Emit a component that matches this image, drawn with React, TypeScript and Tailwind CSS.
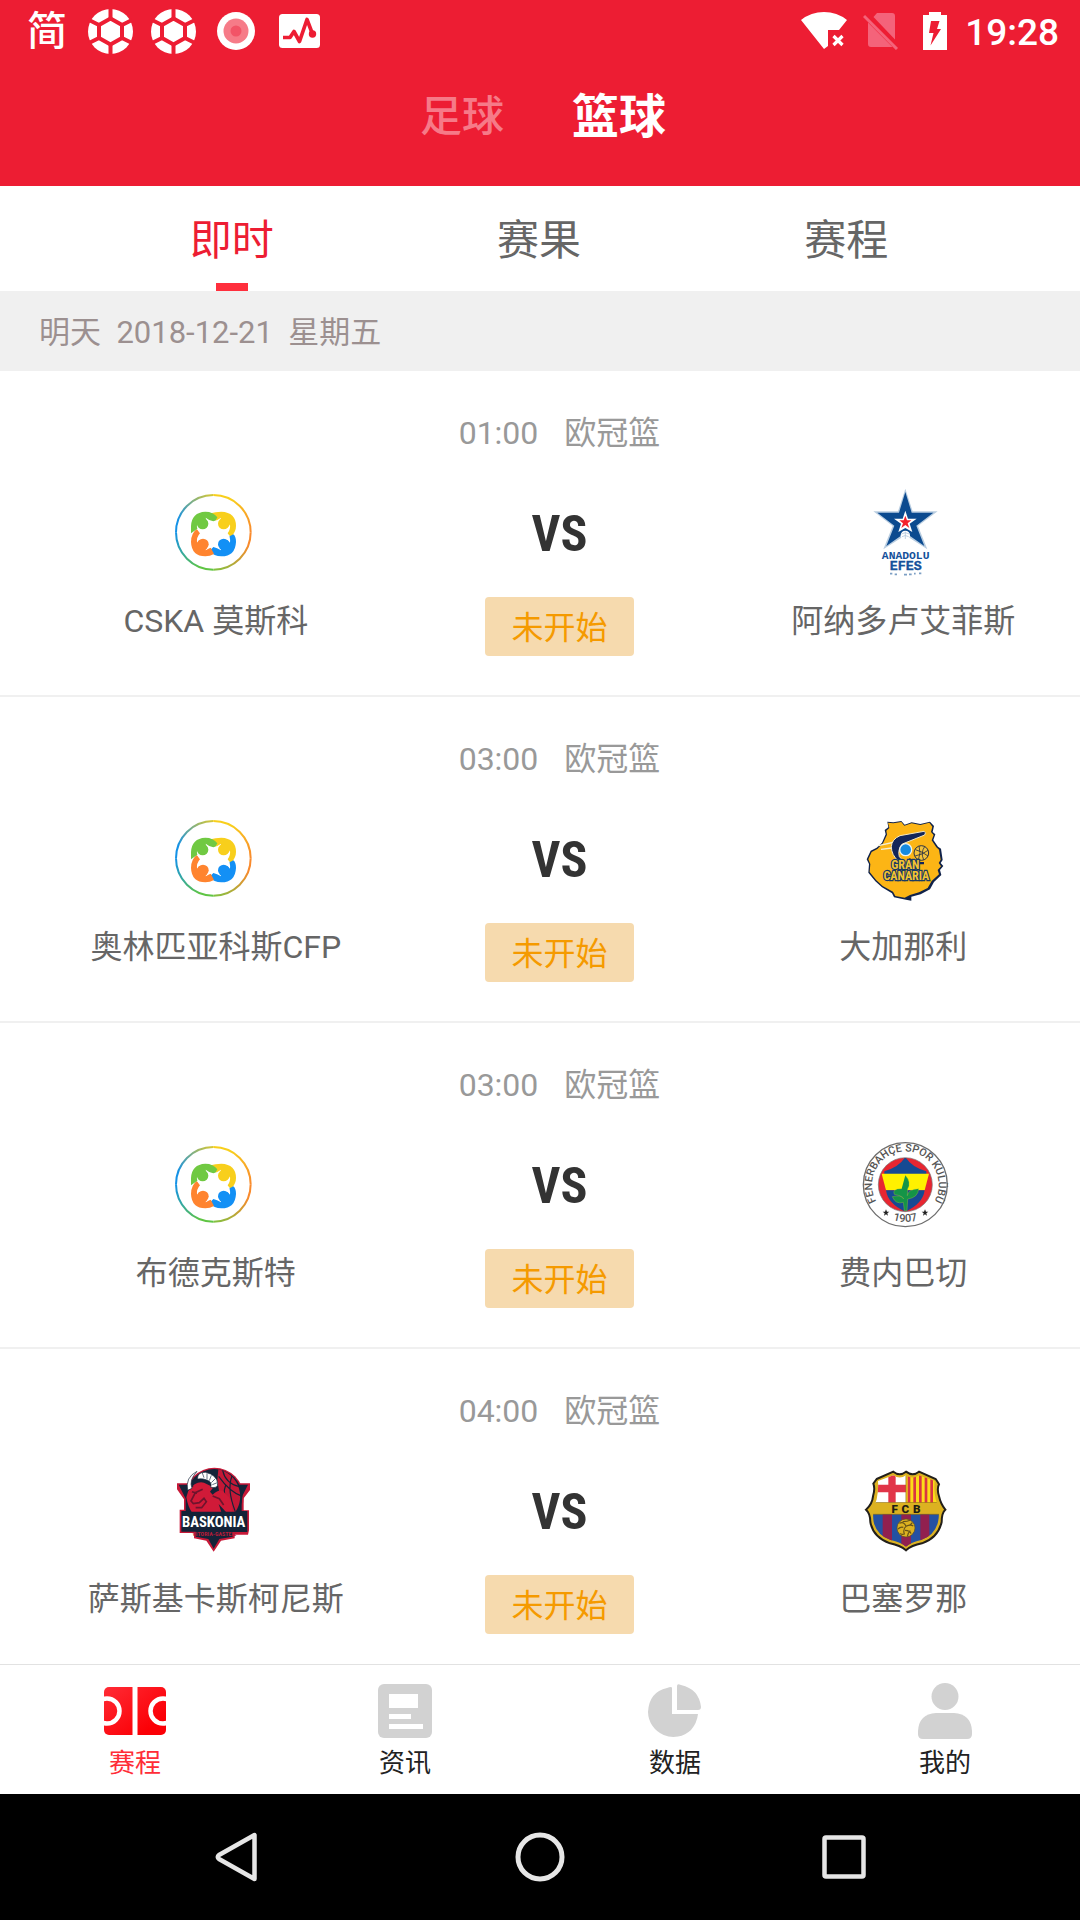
import React from "react";

const RED = "#ed1d33";

/* ---------- status bar icons ---------- */

function BallIcon() {
  return (
    <svg viewBox="0 0 45 45" className="size-[45px]" aria-hidden="true">
      <circle cx="22.5" cy="22.5" r="22.5" fill="#fff" />
      <g stroke={RED} strokeWidth="4" fill="none">
        <path d="M22.5 -1V10M22.5 35V46M1 11 12 16.500M44 11 33 16.500M1 34 12 28.500M44 34 33 28.500" />
        <path d="M22.5 9.500 34 16V29L22.500 35.500 11 29V16Z" />
      </g>
    </svg>
  );
}

function RecordIcon() {
  return (
    <svg viewBox="0 0 38 38" className="size-[38px]" aria-hidden="true">
      <circle cx="19" cy="19" r="19" fill="#fff" />
      <circle cx="19" cy="19" r="12.500" fill="#f67b88" />
      <circle cx="19" cy="19" r="5.500" fill="#f25467" />
    </svg>
  );
}

function PulseIcon() {
  return (
    <svg viewBox="0 0 42 36" className="h-[36px] w-[42px]" aria-hidden="true">
      <rect y="1" width="41" height="34" rx="3.500" fill="#fff" />
      <path d="M4 24.500H11L15 18.500 20.500 28.500 28 6.500 33.500 21" fill="none" stroke={RED} strokeWidth="3.700" strokeLinejoin="round" />
      <circle cx="33.500" cy="21" r="3.700" fill={RED} />
    </svg>
  );
}

function WifiIcon() {
  return (
    <svg viewBox="0 0 46 38" className="h-[38px] w-[46px]" aria-hidden="true">
      <path d="M0 8Q10 0 23 0T46 8L38 18H27V34L23 37Z" fill="#fff" />
      <path d="M32.500 24 41.500 33M41.500 24 32.500 33" stroke="#fff" strokeWidth="3.200" />
    </svg>
  );
}

function NoSimIcon() {
  return (
    <svg viewBox="0 0 36 38" className="h-[38px] w-[36px]" aria-hidden="true">
      <path d="M10.500 5 14 1H29Q32 1 32 4V27.500ZM5 10.500 29.500 35H8Q5 35 5 32Z" fill="#f4637a" />
      <path d="M1 4 34 37" stroke="#f4637a" strokeWidth="3" />
    </svg>
  );
}

function BatteryIcon() {
  return (
    <svg viewBox="0 0 24 38" className="h-[38px] w-[24px]" aria-hidden="true">
      <path d="M6 0H18V3H24V38H0V3H6Z" fill="#fff" />
      <path d="M8 9H16.500L14 17H18L7.500 33.500 10.500 21H6Z" fill={RED} />
    </svg>
  );
}

/* ---------- team logos ---------- */

const logoClass = "size-[88px] overflow-visible";

function DefaultLogo() {
  const uid = React.useId();
  return (
    <svg viewBox="36 24 264 264" className={logoClass} role="img" aria-label="球队">
      <defs>
        <linearGradient id={uid + "a"} x1="0" y1="1" x2="1" y2="0">
          <stop offset=".2" stopColor="#1592e6" />
          <stop offset="1" stopColor="#d8c832" />
        </linearGradient>
        <linearGradient id={uid + "b"} x1="0" y1="0" x2="1" y2="1">
          <stop offset=".3" stopColor="#f8cf1c" />
          <stop offset="1" stopColor="#f98a2c" />
        </linearGradient>
        <linearGradient id={uid + "c"} x1="1" y1="0" x2="0" y2="1">
          <stop offset=".2" stopColor="#f98a2c" />
          <stop offset="1" stopColor="#7fc241" />
        </linearGradient>
        <linearGradient id={uid + "d"} x1="1" y1="1" x2="0" y2="0">
          <stop offset=".2" stopColor="#5fc544" />
          <stop offset="1" stopColor="#1592e6" />
        </linearGradient>
      </defs>
      <g fill="none" strokeWidth="6">
        <path d="M48 157A112 112 0 0 1 160 45" stroke={`url(#${uid}a)`} />
        <path d="M160 45A112 112 0 0 1 272 157" stroke={`url(#${uid}b)`} />
        <path d="M272 157A112 112 0 0 1 160 269" stroke={`url(#${uid}c)`} />
        <path d="M160 269A112 112 0 0 1 48 157" stroke={`url(#${uid}d)`} />
      </g>
      <path d="M152 100Q165 95 184 95Q228 97 228 138Q228 155 214 170L180 150Z" fill="#f8cf1c" />
      <path d="M220 163Q228 170 228 185Q226 229 184 229Q162 229 148 214L170 190Z" fill="#1390f5" />
      <path d="M110 147Q93 160 93 186Q95 229 136 229Q150 229 162 222L140 180Z" fill="#ff842f" />
      <path d="M172 112Q160 95 136 95Q95 97 93 138V160L112 146 140 170Z" fill="#70c942" />
      <path d="M137 113Q148 122 160 124Q171 122 183 113Q176 130 190 142Q204 146 210 133Q212 148 203 160Q212 170 210 188Q203 176 190 180Q176 186 183 211Q171 203 160 201Q148 203 137 211Q144 192 130 180Q117 176 111 188Q109 172 120 160Q109 148 111 133Q117 146 130 142Q144 132 137 113Z" fill="#fff" />
      <circle cx="128" cy="131" r="17" fill="#70c942" />
      <circle cx="191" cy="131" r="17" fill="#f8cf1c" />
      <circle cx="129" cy="193" r="17" fill="#ff842f" />
      <circle cx="191" cy="193" r="17" fill="#1390f5" />
    </svg>
  );
}

function EfesLogo() {
  return (
    <svg viewBox="237 54 264 264" className={logoClass} role="img" aria-label="Anadolu Efes">
      <path d="M376 56 398 124H473L414 168 442 238 376 196 310 238 338 168 280 124H354Z" fill="#b9cde0" />
      <path d="M376 66 395 128H460L409 167 433 228 376 188 319 228 343 167 292 128H357Z" fill="#0b4a8f" />
      <path d="M376 122 384 146H410L389 161 397 186 376 174 355 186 363 161 342 146H368Z" fill="#fff" />
      <path d="M376 137 381 151H394L383 160 388 174 376 165 364 174 369 160 358 151H371Z" fill="#f4222c" />
      <circle cx="376" cy="196" r="14" fill="#fff" />
      <path d="M364 192Q376 184 388 192M366 200Q376 193 386 200M376 185V207" stroke="#b4c8dc" strokeWidth="2.500" fill="none" />
      <text x="377" y="268" textAnchor="middle" fontSize="34" fontWeight="700" fontFamily="Liberation Mono, monospace" fill="#14509a">ANADOLU</text>
      <text x="377" y="301" textAnchor="middle" fontSize="40" fontWeight="700" fontFamily="Liberation Mono, monospace" fill="#14509a" stroke="#14509a" strokeWidth="1">EFES</text>
      <path d="M330 311H337M344 313H351M372 314H381M387 313H395M402 311H407M417 310H424" stroke="#7d9fc4" strokeWidth="5" />
    </svg>
  );
}

function CanariaLogo() {
  return (
    <svg viewBox="27 42 264 264" className={logoClass} role="img" aria-label="Gran Canaria">
      <path d="M112 65 130 67 154 63 164 74 185 67 211 72 240 65 252 78 248 96 256 103 250 120 264 140 273 146 278 180 272 189 280 198 270 210 274 225 252 246 240 268 212 283 184 290 184 302 168 299 132 292 126 280 96 262 76 244 55 218 57 192 50 178 62 152 80 143 96 128 107 103 104 90 115 82Z" fill="#10224a" />
      <path d="M114 68 130 70 154 66 163 77 185 70 211 75 238 68 247 80 243 96 251 105 245 121 259 142 267 149 272 179 266 189 273 199 263 210 267 223 245 243 233 264 207 277 180 285 164 293 136 288 129 275 98 258 79 241 59 216 61 192 55 178 65 156 82 147 99 130 111 104 109 92 118 84Z" fill="#fcb515" />
      <path d="M85 137 135 126M93 148 126 144" stroke="#f5efd6" strokeWidth="4" />
      <path d="M222 94 150 107Q125 118 124 140Q124 165 146 184L165 188 148 170Q142 150 157 132L224 105Q230 97 222 94Z" fill="#12265a" stroke="#f4e8bd" strokeWidth="3" />
      <circle cx="167" cy="149" r="18" fill="#178be0" stroke="#eff4f2" strokeWidth="4" />
      <path d="M176 173 204 186H222V193H190Z" fill="#12265a" />
      <circle cx="214" cy="159" r="22" fill="#f4c23a" stroke="#293043" strokeWidth="3" />
      <path d="M196 149Q216 154 234 168M195 168Q218 164 234 151M207 138Q214 158 205 180M224 140Q211 158 221 179" fill="none" stroke="#293043" strokeWidth="2.500" />
      <g fontFamily="Roboto Condensed, Liberation Sans Narrow, Roboto, sans-serif" fontWeight="700" textAnchor="middle" stroke="#1b3b62" strokeWidth="7" paintOrder="stroke" fill="#f4c430">
        <text x="166" y="206" fontSize="36">GRAN</text>
        <text x="169" y="241" fontSize="36">CANARIA</text>
      </g>
    </svg>
  );
}

function FenerLogo() {
  return (
    <svg viewBox="27 30 264 264" className={logoClass} role="img" aria-label="Fenerbahçe">
      <defs>
        <clipPath id="fb-core"><circle cx="166" cy="164" r="80" /></clipPath>
        <path id="fb-arc" d="M85 223A100 100 0 1 1 247 223" />
        <path id="fb-base" d="M110 264Q166 288 222 264" />
      </defs>
      <circle cx="166" cy="164" r="126" fill="#fff" stroke="#6d6d6d" strokeWidth="4" />
      <circle cx="166" cy="164" r="81" fill="#e72631" stroke="#777" strokeWidth="2" />
      <g clipPath="url(#fb-core)">
        <path d="M166 80Q150 110 103 124V132H229V124Q182 110 166 80Z" fill="#164a93" />
        <path d="M95 131H237L224 181H108Z" fill="#fff100" />
        <path d="M108 181H224Q218 222 166 245Q114 222 108 181Z" fill="#164a93" />
      </g>
      <path d="M166 136Q185 157 173 177L172 197Q174 178 206 176Q204 203 173 207L171 242H163L160 217Q137 224 127 200Q153 193 161 207Q160 198 133 193 125 176 155 176 164 196L160 176Q148 157 166 136Z" fill="#149447" stroke="#bccf30" strokeWidth="1" />
      <g fontFamily="Roboto, sans-serif" fill="#555" fontWeight="500">
        <text fontSize="32"><textPath href="#fb-arc" startOffset="50%" textAnchor="middle">FENERBAHÇE SPOR KULÜBÜ</textPath></text>
        <text fontSize="33"><textPath href="#fb-base" startOffset="50%" textAnchor="middle">1907</textPath></text>
      </g>
      <path id="fb-star" d="M108 238 111 245 118 245 112 250 114 257 108 253 102 257 104 250 98 245 105 245Z" fill="#222" />
      <use href="#fb-star" x="117" />
    </svg>
  );
}

function BaskoniaLogo() {
  return (
    <svg viewBox="36 48 264 264" className={logoClass} role="img" aria-label="Baskonia">
      <circle cx="163" cy="141" r="88" fill="#c71938" />
      <path d="M51 100H270V120L251 145V181H267V241L264 254H224V265L183 272 161 305 139 272 102 265V249H59V179H72V148L51 118Z" fill="#c71938" />
      <path d="M56 104H264L245 142V183H262V246H218V260L178 267 161 296 145 267 107 260V245H64V183H77V146Z" fill="#142338" />
      <circle cx="163" cy="141" r="84" fill="#142338" />
      <path d="M175 58A83 83 0 0 1 226 186L214 192Q202 150 178 129L172 90Z" fill="#c41836" />
      <path d="M188 61Q196 100 238 110M176 79Q209 126 247 139M216 78Q200 118 226 185M197 106Q184 135 210 165" stroke="#142338" strokeWidth="3.500" fill="none" />
      <path d="M85 122Q108 91 132 98L160 112 150 125 158 134Q184 111 196 131Q218 145 218 188L200 188 176 162 184 186H95Q84 170 79 142Z" fill="#d01a38" />
      <path d="M128 118 106 128 93 153 100 161 118 158 132 145 139 155 125 173 107 173M96 125 111 130M158 138 178 146 191 165" fill="none" stroke="#6e142d" strokeWidth="5" />
      <path d="M88 103 101 108 90 116Z" fill="#142338" />
      <path d="M83 121Q75 82 111 64Q86 91 96 115ZM112 87Q113 65 137 67Q171 75 173 101Q174 116 152 112Q157 97 143 91Q129 84 112 87Z" fill="#fff" stroke="#142338" strokeWidth="2" />
      <path d="M127 69 132 83M141 70 141 88M154 76 148 92M166 86 154 98M172 98 157 104" stroke="#657282" strokeWidth="3" />
      <path d="M67 185H259V239H67Z" fill="#142338" />
      <text x="161" y="230" fontSize="44" textAnchor="middle" fontFamily="Roboto Condensed, Liberation Sans Narrow, Roboto, sans-serif" fontWeight="700" fill="#fff">BASKONIA</text>
      <text x="163" y="257" fontSize="18" textAnchor="middle" fontFamily="Roboto Condensed, Liberation Sans Narrow, Roboto, sans-serif" fontWeight="700" fill="#b81b38">VITORIA-GASTEIZ</text>
    </svg>
  );
}

function BarcaLogo() {
  const shield = "M80 87 130 65Q149 80 168 65Q188 80 207 65L257 87Q262 94 267 103Q260 116 267 139Q272 162 286 179Q275 188 275 216Q264 264 216 280Q184 286 168 301Q150 286 120 280Q69 262 61 216Q61 190 48 179Q67 162 69 139Q76 116 70 101Z";
  return (
    <svg viewBox="27 48 264 264" className={logoClass} role="img" aria-label="FC Barcelona">
      <defs>
        <clipPath id="bc-in"><path d="M84 93 130 76Q149 89 168 76Q188 89 207 76L254 93Q251 120 257 148Q272 180 264 216Q254 257 213 270Q184 276 168 290Q152 276 122 270Q80 256 71 216Q65 182 80 148Q86 120 84 93Z" /></clipPath>
      </defs>
      <path d={shield} fill="#dcb221" stroke="#221f1b" strokeWidth="6" />
      <g clipPath="url(#bc-in)">
        <path d="M60 60H168V158H60Z" fill="#fff" />
        <path d="M115 60H137V158H115ZM60 104H168V127H60Z" fill="#e13548" />
        <path d="M168 60H280V158H168Z" fill="#fcdc19" />
        <path d="M177 60V158M194 60V158M211 60V158M228 60V158M245 60V158" stroke="#d93642" strokeWidth="8" />
        <path d="M60 193H280V300H60Z" fill="#2451a3" />
        <path d="M98 193H126V300H98ZM154 193H183V300H154ZM211 193H238V300H211Z" fill="#91204f" />
        <path d="M168 70V158M60 158H280" stroke="#997a19" strokeWidth="2.500" />
        <path d="M40 159H290V192H40Z" fill="#dcb221" />
        <path d="M40 193H290" stroke="#7e671d" strokeWidth="2" />
      </g>
      <circle cx="168" cy="234" r="27" fill="#dcb221" stroke="#5e4f1e" strokeWidth="2" />
      <path d="M148 220Q162 213 168 229Q182 222 190 228M168 229Q158 237 163 252Q156 255 151 250M165 241Q180 241 183 251M158 215Q173 215 180 211M144 237Q152 229 160 232M187 218Q182 225 178 225M172 259Q174 248 181 242" fill="none" stroke="#675317" strokeWidth="3.500" />
      <g textAnchor="middle" fontFamily="Roboto, sans-serif" fontSize="35" fontWeight="900" fill="#211d13">
        <text x="134" y="188">F</text>
        <text x="166" y="188">C</text>
        <text x="200" y="188">B</text>
      </g>
    </svg>
  );
}

/* ---------- bottom navigation icons ---------- */

function CourtIcon() {
  return (
    <svg viewBox="0 0 62 56" className="h-[56px] w-[62px]" aria-hidden="true">
      <defs>
        <linearGradient id="court" x1="0" y1="0" x2="1" y2="1">
          <stop stopColor="#ff2b35" />
          <stop offset=".8" stopColor="#fb0006" />
        </linearGradient>
        <clipPath id="court-clip"><rect y="4" width="62" height="48" rx="5" /></clipPath>
      </defs>
      <rect y="4" width="62" height="48" rx="5" fill="url(#court)" />
      <g clipPath="url(#court-clip)" fill="none" stroke="#fff" strokeWidth="4.500">
        <path d="M31 0V56" strokeWidth="5" />
        <circle cx="3" cy="28" r="12.500" />
        <circle cx="59" cy="28" r="12.500" />
      </g>
    </svg>
  );
}

function NewsIcon() {
  return (
    <svg viewBox="0 0 56 56" className="size-[56px]" aria-hidden="true">
      <rect x="1" y="1" width="54" height="54" rx="6" fill="#d2d2d2" />
      <path d="M12 11H41V25H12ZM12 31H34V36H12ZM12 41H46V46H12Z" fill="#fff" />
    </svg>
  );
}

function PieIcon() {
  return (
    <svg viewBox="0 0 56 56" className="size-[56px]" aria-hidden="true">
      <path d="M25 5V31H51Q50 40 44 47A25.500 25.500 0 0 1 1 29Q2 9 20 5Q25 3 25 5Z" fill="#d2d2d2" />
      <path d="M30 3Q30 0 34 2Q52 6 54 24Q54 27 51 27H30Z" fill="#d2d2d2" />
    </svg>
  );
}

function PersonIcon() {
  return (
    <svg viewBox="0 0 56 56" className="size-[56px]" aria-hidden="true">
      <circle cx="28" cy="13.500" r="13.500" fill="#d2d2d2" />
      <path d="M19 30H37Q54 31 55 48V51Q55 56 50 56H6Q1 56 1 51V48Q2 31 19 30Z" fill="#d2d2d2" />
    </svg>
  );
}

/* ---------- data ---------- */

const matches = [
  { time: "01:00", home: "CSKA 莫斯科", away: "阿纳多卢艾菲斯", homeLogo: <DefaultLogo />, awayLogo: <EfesLogo /> },
  { time: "03:00", home: "奥林匹亚科斯CFP", away: "大加那利", homeLogo: <DefaultLogo />, awayLogo: <CanariaLogo /> },
  { time: "03:00", home: "布德克斯特", away: "费内巴切", homeLogo: <DefaultLogo />, awayLogo: <FenerLogo /> },
  { time: "04:00", home: "萨斯基卡斯柯尼斯", away: "巴塞罗那", homeLogo: <BaskoniaLogo />, awayLogo: <BarcaLogo /> },
];

const navItems = [
  { label: "赛程", icon: <CourtIcon />, active: true },
  { label: "资讯", icon: <NewsIcon />, active: false },
  { label: "数据", icon: <PieIcon />, active: false },
  { label: "我的", icon: <PersonIcon />, active: false },
];

function Team({ logo, name }: { logo: React.ReactNode; name: string }) {
  return (
    <div className="flex flex-col items-center gap-[25px]">
      {logo}
      <span className="text-[32px] leading-10 whitespace-nowrap text-[#666666]">{name}</span>
    </div>
  );
}

export default function App() {
  return (
    <div className="flex h-screen flex-col overflow-hidden bg-white font-['Roboto','Noto_Sans_CJK_SC',sans-serif]">
      <header className="shrink-0 bg-[#ed1d33] text-white">
        <div className="flex h-[62px] items-center justify-between pr-[21px] pl-[27px]">
          <div className="flex items-center">
            <span className="mr-[21px] pt-[2px] text-[40px] leading-none font-medium">简</span>
            <div className="flex items-center gap-[18px]">
              <BallIcon />
              <BallIcon />
            </div>
            <div className="ml-[21px] flex items-center gap-6">
              <RecordIcon />
              <PulseIcon />
            </div>
          </div>
          <div className="flex items-center">
            <WifiIcon />
            <span className="ml-4"><NoSimIcon /></span>
            <span className="ml-6"><BatteryIcon /></span>
            <time className="ml-[18px] pt-[2px] text-[37px] leading-none font-medium">19:28</time>
          </div>
        </div>
        <div className="flex h-[124px] items-start justify-center gap-[68px] pt-[25px] pl-[6px]">
          <button className="h-[60px] text-[42px] leading-[60px] font-medium text-[#f67a88]">足球</button>
          <button className="h-[60px] text-[47px] leading-[60px] font-bold">篮球</button>
        </div>
      </header>

      <div className="grid h-[105px] shrink-0 grid-cols-3 pr-[80px] pl-[78px] text-[42px] text-[#666666]">
        <button className="relative pt-1 text-[#ed1d33]">
          即时
          <span className="absolute bottom-0 left-1/2 h-2 w-8 -translate-x-1/2 bg-[#ff2f3d]" />
        </button>
        <button className="pt-1">赛果</button>
        <button className="pt-1">赛程</button>
      </div>

      <main className="min-h-0 flex-1 overflow-y-auto [scrollbar-width:none]">
        <h2 className="flex h-[80px] items-center bg-[#f0f0f0] pt-1 pl-[39px] text-[31px] whitespace-pre text-[#9c9090]">
          {"明天  2018-12-21  星期五"}
        </h2>
        {matches.map((m) => (
          <article key={m.home} className="border-b-2 border-[#f0f0f0] pt-[38px] pr-[5px] pb-[39px] pl-[44px]">
            <div className="flex h-12 items-center justify-center gap-[26px] text-[32px] text-[#999999]">
              <time>{m.time}</time>
              <span>欧冠篮</span>
            </div>
            <div className="mt-[31px] grid grid-cols-3">
              <Team logo={m.homeLogo} name={m.home} />
              <div className="flex flex-col items-center gap-[21px]">
                <span className="flex h-[88px] items-center pt-1 font-['Roboto_Condensed','Liberation_Sans_Narrow','Roboto',sans-serif] text-[50px] leading-none font-bold text-[#333333]">
                  VS
                </span>
                <span className="flex h-[59px] items-center rounded bg-[#f6daae] px-[26px] pt-[2px] text-[32px] text-[#f59a00]">未开始</span>
              </div>
              <Team logo={m.awayLogo} name={m.away} />
            </div>
          </article>
        ))}
      </main>

      <nav className="grid h-[130px] shrink-0 grid-cols-4 border-t border-[#e2e2e2] bg-white text-[26px] text-[#222222]">
        {navItems.map((n) => (
          <button key={n.label} className={n.active ? "flex flex-col items-center gap-[5px] pt-[18px] text-[#ff2d37]" : "flex flex-col items-center gap-[5px] pt-[18px]"}>
            {n.icon}
            <span className="leading-[38px]">{n.label}</span>
          </button>
        ))}
      </nav>

      <div className="grid h-[126px] shrink-0 grid-cols-3 bg-black px-[84px]">
        <button aria-label="返回" className="flex items-center justify-center">
          <svg viewBox="0 0 52 52" className="size-[52px]" fill="none" stroke="#e6e6e6" strokeWidth="4.500" strokeLinejoin="round">
            <path d="M44.500 4V48L9 28Q6.500 26 9 24Z" />
          </svg>
        </button>
        <button aria-label="主页" className="flex items-center justify-center">
          <svg viewBox="0 0 52 52" className="size-[52px]" fill="none" stroke="#e6e6e6" strokeWidth="5">
            <circle cx="26" cy="26" r="22" />
          </svg>
        </button>
        <button aria-label="最近任务" className="flex items-center justify-center">
          <svg viewBox="0 0 52 52" className="size-[52px]" fill="none" stroke="#e6e6e6" strokeWidth="4.500">
            <rect x="6.500" y="6.500" width="39" height="39" rx="1.500" />
          </svg>
        </button>
      </div>
    </div>
  );
}
